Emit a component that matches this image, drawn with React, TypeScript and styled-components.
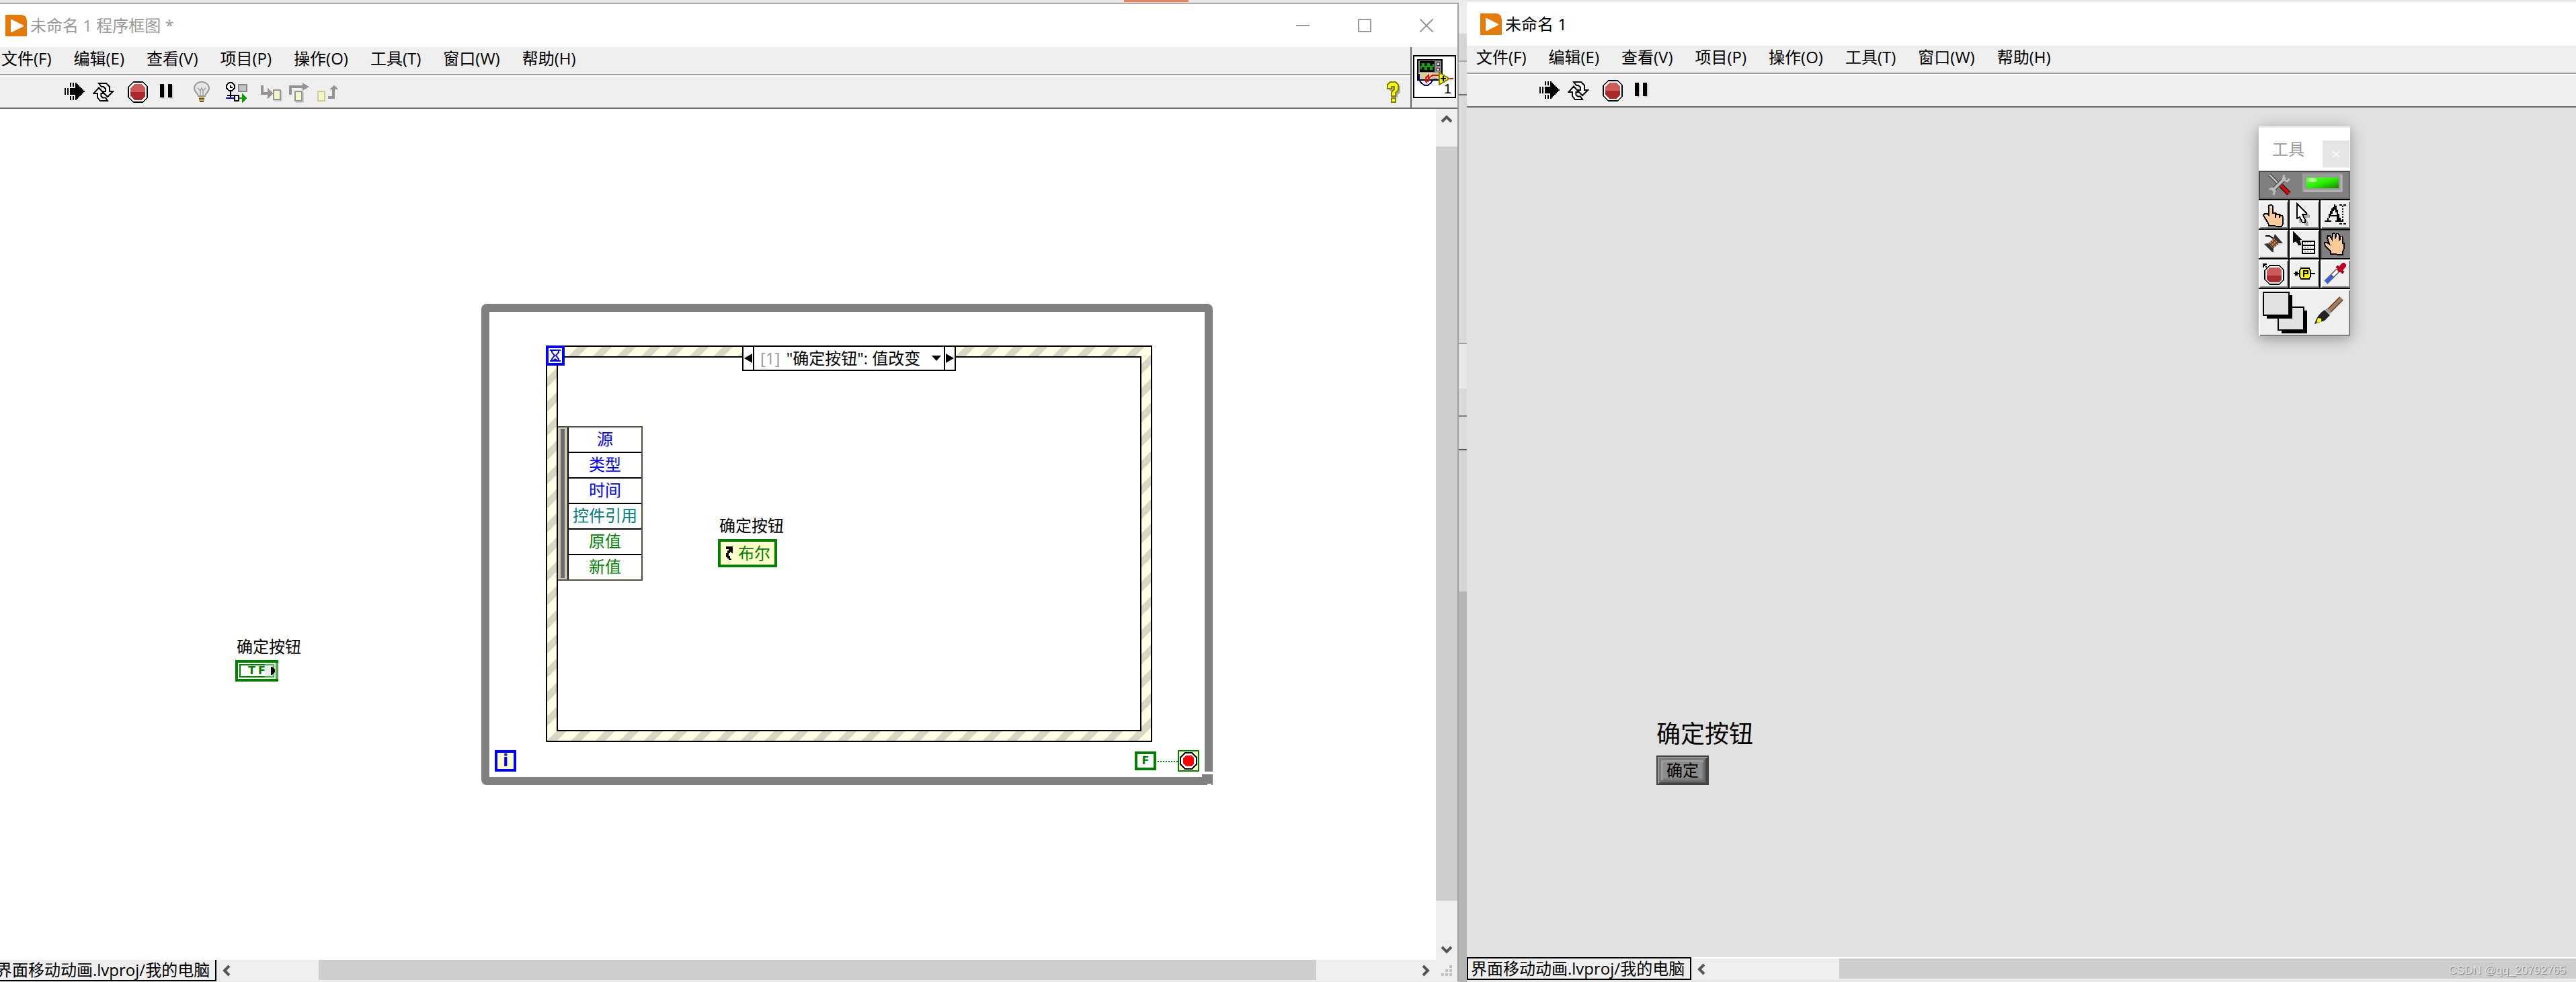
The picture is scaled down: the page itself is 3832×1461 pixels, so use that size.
import React from "react";
import styled, { createGlobalStyle, css } from "styled-components";

const GlobalStyle = createGlobalStyle`
  * { box-sizing: border-box; }
  html, body { margin: 0; padding: 0; }
  body {
    background: #e4e4e4;
    color: #000;
    font-family: "Open Sans", "Noto Sans CJK SC", sans-serif;
    font-size: 24px;
    line-height: 32px;
    overflow: hidden;
  }
  button {
    font: inherit; color: inherit; background: none; border: 0;
    margin: 0; padding: 0; border-radius: 0;
  }
  svg { display: block; flex: none; }
  h1, h2 { margin: 0; font: inherit; }
`;

/* ---------- desktop and windows ---------- */

const Desktop = styled.main`
  position: relative;
  display: grid;
  grid-template-columns: 2170fr 12px 1650fr;
  min-height: 100vh;
  overflow: hidden;
  background: #e6e6e6;
`;

const BackgroundTab = styled.div`
  position: absolute;
  top: 0;
  left: 1672px;
  width: 96px;
  height: 3px;
  background: #f0805c;
`;

const Gap = styled.div`
  background: linear-gradient(
    180deg,
    #ececec 0 50px,
    #d6d6d6 50px 90px,
    #a8a8a8 90px 92px,
    #dedede 92px 140px,
    #6e6e6e 140px 142px,
    #d9d9d9 142px 510px,
    #a0a0a0 510px 512px,
    #e8e8e8 512px 578px,
    #d9d9d9 578px 618px,
    #808080 618px 620px,
    #dcdcdc 620px 668px,
    #555 668px 670px,
    #d4d4d4 670px 880px,
    #b4b4b4 880px
  );
`;

const Frame = styled.section<{ $side: "left" | "right" }>`
  display: flex;
  flex-direction: column;
  min-width: 0;
  background: #efefef;
  ${(p) =>
    p.$side === "left"
      ? css`
          margin: 4px 0 1px -12px;
          border-top: 2px solid #a8a8a8;
          border-right: 2px solid #a0a0a0;
        `
      : css`
          margin: 2px 0 3px;
          border-top: 2px solid #f4f4f4;
        `}
`;

const TitleBar = styled.header`
  display: flex;
  align-items: center;
  height: 64px;
  padding: 0 30px 0 20px;
  background: #fff;
`;

const Title = styled.h1<{ $active?: boolean }>`
  flex: 1;
  padding-left: 5px;
  color: ${(p) => (p.$active ? "#000" : "#999")};
  white-space: pre;
`;

const Captions = styled.div`
  display: flex;
  gap: 60px;
`;

const PlainButton = styled.button`
  display: flex;
  align-items: center;
  justify-content: center;
  width: 32px;
  height: 32px;
`;

const Head = styled.div`
  display: flex;
  border-bottom: 2px solid #696969;
`;

const HeadMain = styled.div`
  flex: 1;
  min-width: 0;
`;

const HeadSide = styled.div`
  width: 70px;
  padding: 12px 0 0 2px;
  border-left: 2px solid #696969;
`;

const MenuBar = styled.nav`
  display: flex;
  gap: 33px;
  height: 42px;
  padding: 1px 14px 0;
  border-bottom: 2px solid #a0a0a0;
`;

const MenuItem = styled.button`
  height: 32px;
  white-space: nowrap;
`;

const Toolbar = styled.div`
  display: flex;
  align-items: center;
  gap: 20px;
  height: 48px;
  padding: 0 9px 0 108px;
  border-top: 2px solid #fff;
`;

const ToolGroup = styled.div<{ $end?: boolean }>`
  display: flex;
  gap: 10px;
  margin-left: ${(p) => (p.$end ? "auto" : "0")};
`;

const Body = styled.div`
  display: flex;
  flex: 1;
  min-height: 0;
`;

const Canvas = styled.div<{ $tone: string }>`
  position: relative;
  flex: 1;
  min-width: 0;
  overflow: hidden;
  background: ${(p) => p.$tone};
`;

/* ---------- scroll bars ---------- */

const VScroll = styled.div`
  display: flex;
  flex-direction: column;
  width: 32px;
  background: #efefef;
`;

const VSpace = styled.div<{ $grow: number }>`
  flex: ${(p) => p.$grow} 1 0;
`;

const VThumb = styled.div`
  flex: 1120 1 0;
  background: #cdcdcd;
`;

const Bottom = styled.footer<{ $line?: boolean }>`
  display: flex;
  align-items: flex-start;
  height: ${(p) => (p.$line ? "34px" : "32px")};
  border-top: ${(p) => (p.$line ? "2px solid #fff" : "0")};
`;

const ProjectLabel = styled.button`
  flex: none;
  height: 34px;
  width: 334px;
  margin-top: -2px;
  padding-left: 4px;
  border: 2px solid #000;
  line-height: 30px;
  text-align: left;
  white-space: nowrap;
`;

const HTrack = styled.div`
  display: flex;
  flex: 1;
  height: 30px;
`;

const HSpace = styled.div<{ $grow: number }>`
  flex: ${(p) => p.$grow} 1 0;
`;

const HThumb = styled.div<{ $grow: number }>`
  flex: ${(p) => p.$grow} 1 0;
  background: #cdcdcd;
`;

/* ---------- block diagram ---------- */

const Node = styled.div<{ $x: number; $y: number }>`
  position: absolute;
  left: ${(p) => p.$x}px;
  top: ${(p) => p.$y}px;
`;

const NodeLabel = styled.div<{ $large?: boolean }>`
  font-size: ${(p) => (p.$large ? "36px" : "24px")};
  line-height: ${(p) => (p.$large ? "48px" : "32px")};
  white-space: nowrap;
`;

const WhileLoop = styled.div`
  position: absolute;
  left: 728px;
  top: 290px;
  width: 1088px;
  height: 716px;
  border: 12px solid #808080;
  border-radius: 8px;
`;

const LoopCorner = styled.svg`
  position: absolute;
  right: -12px;
  bottom: -12px;
`;

const EventStructure = styled.div`
  position: absolute;
  left: 84px;
  top: 50px;
  width: 902px;
  height: 590px;
  padding: 14px;
  border: 2px solid #000;
  background: linear-gradient(
      135deg,
      #d8d8c4 0 22.2%,
      #ffffe6 22.2% 50%,
      #d8d8c4 50% 72.2%,
      #ffffe6 72.2%
    )
    9px 0 / 36px 36px;
`;

const EventBody = styled.div`
  height: 100%;
  border: 2px solid #000;
  background: #fff;
`;

const Timeout = styled.div`
  position: absolute;
  left: -2px;
  top: -2px;
  display: flex;
  align-items: center;
  justify-content: center;
  width: 28px;
  height: 30px;
  border: 4px solid #00f;
  background: #ffffe0;
`;

const Selector = styled.div`
  position: absolute;
  left: 290px;
  top: 0;
  display: flex;
  width: 318px;
  height: 36px;
  border: 2px solid #000;
  border-top: 0;
  background: #fff;
`;

const SelectorArrow = styled.button`
  display: flex;
  align-items: center;
  justify-content: center;
  width: 14px;
`;

const SelectorCase = styled.button`
  display: flex;
  flex: 1;
  align-items: center;
  justify-content: space-between;
  padding: 0 4px 0 9px;
  border: solid #000;
  border-width: 0 2px;
  white-space: pre;
`;

const CaseIndex = styled.span`
  margin-right: 3px;
  color: #999;
`;

const EventData = styled.div`
  position: absolute;
  left: 16px;
  top: 118px;
  display: flex;
  width: 126px;
  border: 2px solid #505040;
  border-left: 0;
`;

const DataGrip = styled.div`
  width: 14px;
  padding: 2px 4px;
  background: #c8c8b4;
  &::before {
    content: "";
    display: block;
    width: 6px;
    height: 100%;
    background: #6b6b6b;
  }
`;

const DataList = styled.ul`
  flex: 1;
  margin: 0;
  padding: 0;
  list-style: none;
  border-left: 2px solid #000;
  background: #fff;
`;

const DataItem = styled.li<{ $color: string }>`
  height: 38px;
  border-bottom: 2px solid #000;
  color: ${(p) => p.$color};
  line-height: 34px;
  text-align: center;
  &:last-child { height: 36px; border-bottom: 0; }
`;

const LocalVariable = styled.div`
  display: flex;
  align-items: center;
  gap: 6px;
  width: 88px;
  height: 42px;
  padding-left: 4px;
  border: 4px solid #008000;
  background: #ffffcc;
  color: #008000;
`;

const Terminal = styled.div<{ $tone: string; $fill: string; $w: number; $h: number; $edge: number }>`
  display: flex;
  align-items: center;
  justify-content: center;
  width: ${(p) => p.$w}px;
  height: ${(p) => p.$h}px;
  border: ${(p) => p.$edge}px solid ${(p) => p.$tone};
  background: ${(p) => p.$fill};
  color: ${(p) => p.$tone};
  font: bold ${(p) => (p.$h > 30 ? "24px" : "16px")}/20px "DejaVu Sans", sans-serif;
`;

const BoolTerminal = styled.div`
  position: relative;
  display: flex;
  width: 64px;
  height: 32px;
  padding: 2px;
  border: 4px solid #008000;
  background: #fff;
  color: #008000;
  font: bold 16px/16px "DejaVu Sans", sans-serif;
  &::after {
    content: "";
    position: absolute;
    inset: 0 -4px 0 40px;
    background: rgba(190, 220, 190, 0.45);
  }
`;

const BoolInner = styled.div`
  display: flex;
  flex: 1;
  align-items: center;
  justify-content: center;
  gap: 4px;
  border: 2px solid #008000;
`;

const BoolArrow = styled.svg`
  position: absolute;
  right: 0;
  top: 6px;
  z-index: 1;
`;

const Wire = styled.div`
  width: 32px;
  height: 2px;
  background: repeating-linear-gradient(90deg, #fff 0 2px, #008000 2px 4px);
`;

/* ---------- front panel ---------- */

const OkButton = styled.button`
  display: block;
  width: 78px;
  height: 44px;
  border: 2px solid #404040;
  background: #8c8c8c;
  box-shadow: inset 2px 2px 0 #989898, inset -3px -2px 0 #484848,
    inset 5px 5px 0 #7a7a7a, inset -6px -5px 0 #6a6a6a, inset 8px 8px 0 #9a9a9a,
    inset -8px -8px 0 #7c7c7c;
  line-height: 36px;
`;

const Palette = styled.aside`
  position: absolute;
  left: 1178px;
  top: 28px;
  display: flex;
  flex-direction: column;
  width: 136px;
  border-top: 2px solid #f0f0f0;
  background: #000;
  box-shadow: 0 4px 20px rgba(0, 0, 0, 0.35);
`;

const PaletteTitle = styled.div`
  display: flex;
  align-items: center;
  justify-content: space-between;
  height: 64px;
  padding: 0 1px 0 20px;
  background: #fff;
  color: #999;
`;

const PaletteClose = styled.button`
  display: flex;
  align-items: center;
  justify-content: center;
  width: 40px;
  height: 40px;
  margin-top: 14px;
  background: #e5e5e5;
`;

const AutoTool = styled.button`
  display: flex;
  align-items: flex-start;
  justify-content: space-between;
  height: 42px;
  padding: 2px 9px 0 12px;
  border: 2px solid #686868;
  border-top-color: #484848;
  border-left-color: #484848;
  background: #808080;
`;

const ToolGrid = styled.div`
  display: grid;
  grid-template-columns: repeat(3, 1fr);
  gap: 2px;
  padding: 2px 0;
`;

const ToolCell = styled.button<{ $on?: boolean }>`
  height: 42px;
  background: ${(p) => (p.$on ? "#808080" : "#efefef")};
  box-shadow: ${(p) =>
    p.$on
      ? "inset 2px 2px 0 #606060"
      : "inset 2px 2px 0 #fff, inset -2px -2px 0 #808080"};
`;

const ColorCell = styled.button`
  height: 70px;
  background: #efefef;
  box-shadow: inset 2px 2px 0 #fff, inset -2px -2px 0 #808080;
`;

const Watermark = styled.div`
  position: absolute;
  right: 15px;
  bottom: 7px;
  color: #e4e4e4;
  font: 17px/20px "Liberation Sans", sans-serif;
  text-shadow: 1px 1px 1px #777;
`;

const IconBox = styled.button`
  position: relative;
  display: block;
  width: 64px;
  height: 64px;
  border: 2px solid #000;
  background: #fff;
`;

const IconNumber = styled.span`
  position: absolute;
  right: 5px;
  bottom: 0;
  font: 20px/24px "Liberation Sans", sans-serif;
`;

/* ---------- drawings ---------- */

type ArtProps = { w: number; h: number; children: React.ReactNode; smooth?: boolean };
const Art = ({ w, h, children, smooth }: ArtProps) => (
  <svg
    width={w * 2}
    height={h * 2}
    viewBox={`0 0 ${w} ${h}`}
    shapeRendering={smooth ? "auto" : "crispEdges"}
    aria-hidden="true"
  >
    {children}
  </svg>
);

const Logo = () => (
  <svg width="32" height="32" viewBox="0 0 32 32" aria-hidden="true">
    <path d="M0 0H24Q32 1 32 9V32H0Z" fill="#e57a0a" />
    <path d="M9 8L26 16.500L9 25Z" fill="#fff" stroke="#fff" strokeWidth="2" strokeLinejoin="round" />
  </svg>
);

const RunIcon = () => (
  <Art w={16} h={16}>
    <path d="M0 5h1v5H0zM2 5h1v5H2zM4 1h1v3H4zM6 1h1v3H6zM4 11h1v3H4zM6 11h1v3H6zM4 5h4V1h1v1h1v1h1v1h1v1h1v1h1v1h1v1h-1v1h-1v1h-1v1h-1v1h-1v1H9v1H8v-4H4z" />
  </Art>
);

const RunLoopIcon = () => (
  <Art w={16} h={16} smooth>
    <path d="M4.500 1.500H10L12.500 4V7.500H15L11 11.500 7 7.500H9.500V5.500L8 4H6.500Z" fill="#fff" stroke="#000" />
    <path d="M11 14.500H5.500L3.500 12V9H.700L4.500 4.800 8.300 9H6.200V11L7.500 12.200H9.500Z" fill="#fff" stroke="#000" />
  </Art>
);

const StopIcon = () => (
  <Art w={16} h={16}>
    <path d="M4 0h7l4 4v8l-4 4H4l-4-4V4z" fill="#000" />
    <path d="M4 1h7l3 3v8l-3 3H4l-3-3V4z" fill="#fff" />
    <path d="M5 2h5l3 3v3H2V5z" fill="#cf5a5a" />
    <path d="M2 8h11v3l-3 3H5l-3-3z" fill="#aa2a2e" />
  </Art>
);

const PauseIcon = () => (
  <Art w={16} h={16}>
    <path d="M4 3h3v10H4zM10 3h3v10h-3z" fill="#cfcfcf" />
    <path d="M3 2h3v10H3zM9 2h3v10H9z" />
  </Art>
);

const BulbIcon = () => (
  <Art w={16} h={16} smooth>
    <path d="M5.500 11C5.500 9 2.500 8 2.500 5.200A5.500 4.800 0 0 1 13.500 5.200C13.500 8 10.500 9 10.500 11Z" fill="#e6e6e6" stroke="#999" />
    <path d="M5 5l2 2 1-2 1 2 2-2M7 7v4M9 7v4" fill="none" stroke="#999" strokeWidth=".7" />
    <path d="M6 11.500h4v3H6z" fill="#d9b84a" />
    <path d="M6 13h4M6.500 15h3" stroke="#555" />
  </Art>
);

const RetainIcon = () => (
  <Art w={16} h={16}>
    <circle cx="3.500" cy="4" r="3" fill="#fff" stroke="#000" />
    <path d="M3 3h1v1h1v1H3zM3 7h1v5H3zM1 10h5v1H1z" />
    <path d="M9.500 2.500h6v5h-6z" fill="#c4c4c4" stroke="#888" />
    <path d="M0 12h7v1H0z" fill="#00f" />
    <path d="M6.500 10.500h3v4h-3z" fill="#fff" stroke="#000" />
    <path d="M10 12h2V9l4 3.500-4 3.500v-3h-2z" fill="#00a000" />
  </Art>
);

const StepIntoIcon = () => (
  <Art w={16} h={16}>
    <path d="M0 3h2v5h3V5l4 4-4 4v-3H0z" fill="#949494" />
    <path d="M10 7h6v8h-6z" fill="#cfcfcf" />
    <path d="M9.500 6.500h5v7h-5z" fill="#f5f5c8" stroke="#949494" />
  </Art>
);

const StepOverIcon = () => (
  <Art w={16} h={16}>
    <path d="M0 10V3h10V1l5 3-5 3V5H2v5z" fill="#949494" />
    <path d="M5 8h6v8H5z" fill="#cfcfcf" />
    <path d="M4.500 7.500h5v7h-5z" fill="#f5f5c8" stroke="#949494" />
  </Art>
);

const StepOutIcon = () => (
  <Art w={16} h={16}>
    <path d="M.500 7.500h5v7h-5z" fill="#f5f5c8" stroke="#cdcd90" />
    <path d="M8 13v-2h3V6H9l3.500-3L16 6h-3v7z" fill="#949494" />
  </Art>
);

const HelpIcon = () => (
  <Art w={12} h={16}>
    <path d="M3 7V4l2-2h4l2 2v4l-2 2v2H6V9l2-2" fill="#aaa" />
    <path d="M1.500 5.500v-3l2-2h4l2 2v4l-2 2v2.500h-3V8l2-2V4h-2v1.500zM4.500 12.500h3v3h-3z" fill="#ff0" stroke="#808000" />
  </Art>
);

const ViIcon = () => (
  <svg width="60" height="60" viewBox="0 0 60 60" shapeRendering="crispEdges" aria-hidden="true">
    <path d="M4 4h38v32H4z" fill="#000" />
    <path d="M6 6h34v22H6z" fill="#8c8c8c" />
    <path d="M6 24h34v10H6z" fill="#cfcfa4" />
    <path d="M8 7h22v16H8z" fill="#000" />
    <path d="M10 19v-4h2v-4h2v4h2v4h2v-4h2v-4h2v4h2v4h2v-4h2v-4" fill="none" stroke="#00b400" strokeWidth="2" />
    <path d="M33 9h4v4h-4zM33 17h4v4h-4z" fill="#ddd" stroke="#333" />
    <path d="M7 26v9l3 4 5 4h5l5-4 3-5h6" fill="none" stroke="#000080" strokeWidth="2" />
    <path d="M17 38v-6l4-4v8l-4 3M22 32l5-4h8l4 2" fill="none" stroke="#f00" strokeWidth="2" />
    <path d="M37 24L52 33L37 42Z" fill="#ff0" stroke="#808000" strokeWidth="2" />
    <path d="M39 32h8v2h-8zM42 29h2v8h-2z" />
    <path d="M53 32h5v2h-5z" fill="#f00" />
  </svg>
);

const Chevron = ({ dir }: { dir: "up" | "down" | "left" | "right" }) => {
  const turn = { left: 0, up: 90, right: 180, down: 270 }[dir];
  return (
    <svg width="20" height="20" viewBox="0 0 20 20" aria-hidden="true">
      <path d="M13 3L6 10L13 17" fill="none" stroke="#555" strokeWidth="4" transform={`rotate(${turn} 10 10)`} />
    </svg>
  );
};

const skin = "#ffcc99";

const FingerArt = () => (
  <Art w={22} h={21}>
    <path d="M7.500 19v-1l-1-2-2-3-1-2 1-1h2l1 1V4l1-.500h1l1 1v5h2l1 1h2l1 1h1l.500 1v5l-1 2z" fill={skin} stroke="#000" />
    <path d="M8 4h2v2H8zM5 11h1v1H5z" fill="#ffe8c8" />
    <path d="M12 9h1v4h-1zM15 10h1v3h-1z" />
  </Art>
);

const ArrowArt = () => (
  <Art w={22} h={21}>
    <path d="M7 4l8 7v2h-3l2 4v2h-2l-3-4-1 2H7z" fill="#aaa" />
    <path d="M5.500 2.500l7 7v1h-3l2 4v2h-2l-2-4-2 1z" fill="#fff" stroke="#000" />
  </Art>
);

const TextArt = () => (
  <Art w={22} h={21}>
    <path d="M10 3h1v1h1v3h1v3h1v3h1v2h2v1h-6v-1h1v-3H7v1H6v2h2v1H3v-1h2v-2h1v-3h1v-2h1V6h1V5h1zM10 7v1H9v2H8v1h4v-2h-1V7z" />
    <path d="M14 3h2v1h-2zM17 3h2v1h-2zM16 4h1v1h-1zM16 6h1v1h-1zM16 8h1v1h-1zM16 10h1v1h-1zM16 12h1v1h-1zM16 14h1v2h-1zM14 17h2v1h-2zM17 17h2v1h-2z" />
  </Art>
);

const WireArt = () => (
  <Art w={22} h={21} smooth>
    <path d="M6.500 10.500L11.500 6L15.500 9.500L10.500 14Z" fill="#d09868" />
    <path d="M7.500 9.500l4 4M9 8.300l4 4M10.500 7l4 4M8 11.500l5-4.500M9.500 13l5-4.500" stroke="#5a3418" strokeWidth=".7" fill="none" />
    <path d="M4 10.500l3-.500 4 4v2.500h-1zM11 6l1-3 6 7-3 0z" fill="#333" />
    <path d="M5 4.500h3l3 2" stroke="#000" fill="none" />
  </Art>
);

const MenuArt = () => (
  <Art w={22} h={21}>
    <path d="M3 2l5 5H7l1 4-1 0-2-3-2 1z" stroke="#000" />
    <path d="M9.500 8.500h9v9h-9z" fill="#fff" stroke="#000" />
    <path d="M9 11h10v1H9zM9 14h10v1H9z" />
    <path d="M11 9.500h6M11 13h6M11 16h6" stroke="#aaa" strokeDasharray="1 1" />
  </Art>
);

const HandArt = () => (
  <Art w={22} h={21}>
    <path d="M7.500 18v-2l-2-2-2-2-.500-2.500h2l1.500 1L5 6 5.500 4.500h1.500L8.500 7 9 3l1-.500 1 1v3l1-3.500h1l1 1v4l1-3h1l.500 1v4l1 0v4l-1 2v2.500z" fill={skin} stroke="#000" />
    <path d="M9.500 3h1v2h-1zM12 3h1v2h-1zM15 5h1v1h-1zM4 10h1v1H4z" fill="#ffe8c8" />
  </Art>
);

const BreakArt = () => (
  <Art w={22} h={21}>
    <path d="M8 4h7l4 4v7l-4 4H8l-4-4V8z" fill="#000" />
    <path d="M8 5h7l3 3v7l-3 3H8l-3-3V8z" fill="#fff" />
    <path d="M8 6h7l2 2v4H6V8z" fill="#cf5a5a" />
    <path d="M6 12h11v3l-2 2H8l-2-2z" fill="#aa2a2e" />
    <path d="M3 3h3v1H5v1h1v1H5V5H4v1H3z" />
  </Art>
);

const ProbeArt = () => (
  <Art w={22} h={21}>
    <path d="M3 10h16v1H3zM4 9h2v3H4z" />
    <path d="M8.500 6.500h6l1 2v4l-1 2h-6l-1-2v-4z" fill="#ff0" stroke="#000" />
    <path d="M10 8h4v3h-3v2h-1zM11 9v1h2V9z" fillRule="evenodd" />
  </Art>
);

const DropperArt = () => (
  <Art w={22} h={21} smooth>
    <path d="M4 17L13 8" stroke="#555" strokeWidth="3.500" />
    <path d="M4 17L13 8" stroke="#fff" strokeWidth="2" />
    <path d="M4 17L9 12" stroke="#3355ee" strokeWidth="2.200" />
    <path d="M12 5l5 5" stroke="#900018" strokeWidth="2" />
    <path d="M14.500 7.500l2.500-3" stroke="#c00020" strokeWidth="4" strokeLinecap="round" />
  </Art>
);

const WrenchArt = () => (
  <Art w={18} h={17} smooth>
    <path d="M1 1l8 8" stroke="#444" strokeWidth="2.400" />
    <path d="M1 1l8 8" stroke="#ccc" strokeWidth="1.200" />
    <path d="M3 13L13 3" stroke="#444" strokeWidth="3.200" />
    <path d="M3 13L13 3" stroke="#bbb" strokeWidth="2" />
    <path d="M1 12l2-1 2 2-1 3M12 1l-1 3 3 2 2-2" fill="none" stroke="#bbb" strokeWidth="1.500" />
    <path d="M9.500 9l6 6" stroke="#500" strokeWidth="3.600" />
    <path d="M9.500 9l6 6" stroke="#d01010" strokeWidth="2" />
  </Art>
);

const Led = () => (
  <svg width="60" height="28" viewBox="0 0 60 28" aria-hidden="true">
    <defs>
      <linearGradient id="led" x1="0" y1="0" x2="1" y2="1">
        <stop offset="0" stopColor="#60ff40" />
        <stop offset=".5" stopColor="#28f000" />
        <stop offset="1" stopColor="#208000" />
      </linearGradient>
    </defs>
    <path d="M0 0h60v28H0z" fill="#9a9a9a" />
    <path d="M2 26h56V2" fill="none" stroke="#b4b4b4" strokeWidth="3" />
    <path d="M6 6h48v16H6z" fill="url(#led)" />
    <ellipse cx="15" cy="10" rx="7" ry="3" fill="#b8ff9c" />
  </svg>
);

const ColorArt = () => (
  <svg width="136" height="70" viewBox="0 0 136 70" aria-hidden="true">
    <path d="M34 32h38v34H34z" />
    <path d="M29 27h38v34H29z" fill="#e1e1e1" stroke="#000" strokeWidth="2" />
    <path d="M12 9h38v35H12z" />
    <path d="M7 5h38v34H7z" fill="#e1e1e1" stroke="#000" strokeWidth="2" />
    <path d="M104 33L123 14" stroke="#5d4030" strokeWidth="8" />
    <path d="M104 33L123 14" stroke="#a67c58" strokeWidth="5" />
    <path d="M98 31l8 8-8 8-15 5q4-14 15-21z" fill="#222" />
    <path d="M100 30l7 6" stroke="#999" strokeWidth="4" />
    <path d="M88 43l5 1 0 5-7 1z" fill="#ff0" />
  </svg>
);

/* ---------- shared pieces ---------- */

const menus = ["文件(F)", "编辑(E)", "查看(V)", "项目(P)", "操作(O)", "工具(T)", "窗口(W)", "帮助(H)"];

const Menus = () => (
  <MenuBar aria-label="菜单">
    {menus.map((m) => (
      <MenuItem key={m} type="button">{m}</MenuItem>
    ))}
  </MenuBar>
);

const Tool = ({ label, children }: { label: string; children: React.ReactNode }) => (
  <PlainButton type="button" aria-label={label}>{children}</PlainButton>
);

const RunTools = () => (
  <>
    <ToolGroup>
      <Tool label="运行"><RunIcon /></Tool>
      <Tool label="连续运行"><RunLoopIcon /></Tool>
    </ToolGroup>
    <ToolGroup>
      <Tool label="中止"><StopIcon /></Tool>
      <Tool label="暂停"><PauseIcon /></Tool>
    </ToolGroup>
  </>
);

const eventFields = [
  { name: "源", color: "#0000ff" },
  { name: "类型", color: "#0000ff" },
  { name: "时间", color: "#0000ff" },
  { name: "控件引用", color: "#008080" },
  { name: "原值", color: "#008000" },
  { name: "新值", color: "#008000" },
];

const Diagram = () => (
  <Canvas $tone="#fff">
    <Node $x={364} $y={784}>
      <NodeLabel>确定按钮</NodeLabel>
    </Node>
    <Node $x={362} $y={820}>
      <BoolTerminal>
        <BoolInner><span>T</span><span>F</span></BoolInner>
        <BoolArrow width="8" height="12" viewBox="0 0 8 12"><path d="M1 0h2l4 4v4l-4 4H1z" /></BoolArrow>
      </BoolTerminal>
    </Node>
    <WhileLoop>
      <EventStructure>
        <EventBody />
        <EventData>
          <DataGrip />
          <DataList>
            {eventFields.map((f) => (
              <DataItem key={f.name} $color={f.color}>{f.name}</DataItem>
            ))}
          </DataList>
        </EventData>
        <Timeout>
          <svg width="16" height="18" viewBox="0 0 16 18" aria-hidden="true">
            <path d="M0 1h16M0 17h16" stroke="#00f" strokeWidth="2" />
            <path d="M3 1v3l4 5-4 5v3M13 1v3L9 9l4 5v3" fill="none" stroke="#00f" strokeWidth="2" />
            <path d="M4 16l4-3 4 3z" fill="#00f" />
          </svg>
        </Timeout>
        <Selector>
          <SelectorArrow type="button" aria-label="上一分支">
            <svg width="12" height="16" viewBox="0 0 12 16" aria-hidden="true"><path d="M12 1v14L0 8z" /></svg>
          </SelectorArrow>
          <SelectorCase type="button" aria-haspopup="listbox">
            <span><CaseIndex>[1]</CaseIndex>{' "确定按钮": 值改变'}</span>
            <svg width="14" height="8" viewBox="0 0 14 8" aria-hidden="true"><path d="M0 0h14L7 8z" /></svg>
          </SelectorCase>
          <SelectorArrow type="button" aria-label="下一分支">
            <svg width="12" height="16" viewBox="0 0 12 16" aria-hidden="true"><path d="M0 1v14l12-7z" /></svg>
          </SelectorArrow>
        </Selector>
      </EventStructure>
      <Node $x={342} $y={302}>
        <NodeLabel>确定按钮</NodeLabel>
      </Node>
      <Node $x={340} $y={338}>
        <LocalVariable>
          <svg width="16" height="20" viewBox="0 0 8 10" shapeRendering="crispEdges" aria-hidden="true">
            <path d="M2 0h5v5H6V4H5v1H4v2h1v2h1v1H4V9H3V8H2V5h1V3h1V2H2z" />
          </svg>
          布尔
        </LocalVariable>
      </Node>
      <Node $x={8} $y={652}>
        <Terminal $tone="#0000ff" $fill="#ffffcc" $w={32} $h={32} $edge={4}>i</Terminal>
      </Node>
      <Node $x={960} $y={654}>
        <Terminal $tone="#008000" $fill="#ffffff" $w={32} $h={28} $edge={4}>F</Terminal>
      </Node>
      <Node $x={992} $y={668}><Wire /></Node>
      <Node $x={1024} $y={652}>
        <Terminal $tone="#008000" $fill="#ffffcc" $w={32} $h={32} $edge={2}>
          <svg width="26" height="26" viewBox="0 0 13 13" shapeRendering="crispEdges" aria-hidden="true">
            <path d="M4 .500h5l3.500 3.500v5L9 12.500H4L.500 9V4z" fill="#fff" stroke="#000" />
            <path d="M4.500 2.500h4l2 2v4l-2 2h-4l-2-2v-4z" fill="#f00" />
          </svg>
        </Terminal>
      </Node>
      <LoopCorner width="16" height="20" viewBox="0 0 16 20" aria-hidden="true">
        <path d="M0 0h16v4H0z" fill="#fff" />
        <path d="M0 4h16v16H0z" fill="#808080" />
        <path d="M8 18h6v2H8z" fill="#fff" />
      </LoopCorner>
    </WhileLoop>
  </Canvas>
);

const tools = [
  { label: "操作值", art: <FingerArt /> },
  { label: "定位", art: <ArrowArt /> },
  { label: "编辑文本", art: <TextArt /> },
  { label: "连线", art: <WireArt /> },
  { label: "快捷菜单", art: <MenuArt /> },
  { label: "滚动窗口", art: <HandArt />, on: true },
  { label: "断点", art: <BreakArt /> },
  { label: "探针", art: <ProbeArt /> },
  { label: "获取颜色", art: <DropperArt /> },
];

const Panel = () => (
  <Canvas $tone="#e1e1e1">
    <Palette aria-label="工具选板">
      <PaletteTitle>
        <h2>工具</h2>
        <PaletteClose type="button" aria-label="关闭">
          <svg width="12" height="12" viewBox="0 0 12 12" aria-hidden="true">
            <path d="M1 2l10 9M11 2L1 11" stroke="#f8f8f8" strokeWidth="2" />
          </svg>
        </PaletteClose>
      </PaletteTitle>
      <AutoTool type="button" aria-label="自动选择工具"><WrenchArt /><Led /></AutoTool>
      <ToolGrid>
        {tools.map((t) => (
          <ToolCell key={t.label} type="button" aria-label={t.label} $on={t.on}>{t.art}</ToolCell>
        ))}
      </ToolGrid>
      <ColorCell type="button" aria-label="设置颜色"><ColorArt /></ColorCell>
    </Palette>
    <Node $x={282} $y={908}>
      <NodeLabel $large>确定按钮</NodeLabel>
    </Node>
    <Node $x={282} $y={964}>
      <OkButton type="button">确定</OkButton>
    </Node>
  </Canvas>
);

export default function App() {
  return (
    <>
      <GlobalStyle />
      <Desktop>
        <BackgroundTab />
        <Frame $side="left">
          <TitleBar>
            <Logo />
            <Title>未命名 1 程序框图 *</Title>
            <Captions>
              <PlainButton type="button" aria-label="最小化">
                <svg width="20" height="20" viewBox="0 0 20 20"><path d="M0 10h20" stroke="#999" strokeWidth="2" /></svg>
              </PlainButton>
              <PlainButton type="button" aria-label="最大化">
                <svg width="20" height="20" viewBox="0 0 20 20"><path d="M1 1h18v18H1z" fill="none" stroke="#999" strokeWidth="2" /></svg>
              </PlainButton>
              <PlainButton type="button" aria-label="关闭">
                <svg width="20" height="20" viewBox="0 0 20 20"><path d="M0 0l20 20M20 0L0 20" stroke="#999" strokeWidth="2" /></svg>
              </PlainButton>
            </Captions>
          </TitleBar>
          <Head>
            <HeadMain>
              <Menus />
              <Toolbar>
                <RunTools />
                <ToolGroup><Tool label="高亮显示执行过程"><BulbIcon /></Tool></ToolGroup>
                <ToolGroup><Tool label="保存连线值"><RetainIcon /></Tool></ToolGroup>
                <ToolGroup>
                  <Tool label="单步步入"><StepIntoIcon /></Tool>
                  <Tool label="单步步过"><StepOverIcon /></Tool>
                  <Tool label="单步步出"><StepOutIcon /></Tool>
                </ToolGroup>
                <ToolGroup $end><Tool label="即时帮助"><HelpIcon /></Tool></ToolGroup>
              </Toolbar>
            </HeadMain>
            <HeadSide>
              <IconBox type="button">
                <ViIcon />
                <IconNumber>1</IconNumber>
              </IconBox>
            </HeadSide>
          </Head>
          <Body>
            <Diagram />
            <VScroll>
              <VSpace $grow={56}><PlainButton type="button" aria-label="向上"><Chevron dir="up" /></PlainButton></VSpace>
              <VThumb />
              <VSpace $grow={56} />
              <PlainButton type="button" aria-label="向下"><Chevron dir="down" /></PlainButton>
            </VScroll>
          </Body>
          <Bottom>
            <ProjectLabel type="button">界面移动动画.lvproj/我的电脑</ProjectLabel>
            <HTrack>
              <PlainButton type="button" aria-label="向左"><Chevron dir="left" /></PlainButton>
              <HSpace $grow={120} />
              <HThumb $grow={1484} />
              <HSpace $grow={146} />
              <PlainButton type="button" aria-label="向右"><Chevron dir="right" /></PlainButton>
              <PlainButton as="div">
                <svg width="18" height="18" viewBox="0 0 18 18" aria-hidden="true">
                  <path d="M13 1h4v4h-4zM7 7h4v4H7zM13 7h4v4h-4zM1 13h4v4H1zM7 13h4v4H7zM13 13h4v4h-4z" fill="#bfbfbf" />
                </svg>
              </PlainButton>
            </HTrack>
          </Bottom>
        </Frame>
        <Gap />
        <Frame $side="right">
          <TitleBar>
            <Logo />
            <Title as="h2" $active>未命名 1</Title>
          </TitleBar>
          <Menus />
          <Head>
            <HeadMain>
              <Toolbar><RunTools /></Toolbar>
            </HeadMain>
          </Head>
          <Body>
            <Panel />
          </Body>
          <Bottom $line>
            <ProjectLabel type="button">界面移动动画.lvproj/我的电脑</ProjectLabel>
            <HTrack>
              <PlainButton type="button" aria-label="向左"><Chevron dir="left" /></PlainButton>
              <HSpace $grow={188} />
              <HThumb $grow={1096} />
            </HTrack>
          </Bottom>
        </Frame>
        <Watermark>CSDN @qq_20792765</Watermark>
      </Desktop>
    </>
  );
}
